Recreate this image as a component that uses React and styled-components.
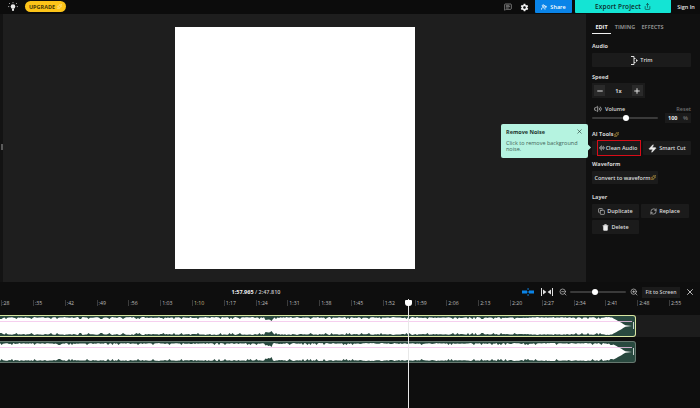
import React from "react";
import styled, { createGlobalStyle } from "styled-components";
import {
  MessageSquareText,
  Minus,
  Plus,
  Share,
  UserPlus,
  X,
  ZoomIn,
  ZoomOut,
  Zap,
  Sparkles,
  Copy,
  RefreshCw,
  Trash,
  Volume2,
  AudioLines,
} from "lucide-react";
import { IoMdSettings } from "react-icons/io";

const GlobalStyle = createGlobalStyle`
  html, body {
    margin: 0;
    padding: 0;
    width: 700px;
    height: 408px;
    overflow: hidden;
    background: #0e0e0e;
    font-family: "Open Sans", "Liberation Sans", sans-serif;
  }
  * { box-sizing: border-box; }
`;

const Page = styled.div`
  position: relative;
  width: 700px;
  height: 408px;
  display: flex;
  flex-direction: column;
  overflow: hidden;
`;

const TopBar = styled.header`
  height: 14px;
  background: #0c0c0c;
  display: flex;
  align-items: center;
  color: #e8e8e8;
`;

const BulbBox = styled.div`
  width: 25px;
  display: flex;
  justify-content: center;
`;

const Upgrade = styled.div`
  width: 41px;
  height: 11px;
  margin-top: -1px;
  border-radius: 6px;
  background: #fcc419;
  color: #4a3a06;
  font-size: 5.5px;
  font-weight: 700;
  display: flex;
  align-items: center;
  justify-content: center;
  gap: 2px;
`;

const TopRight = styled.div`
  margin-left: auto;
  height: 100%;
  display: flex;
  align-items: center;
`;

const TopIcon = styled.div`
  width: 17px;
  display: flex;
  justify-content: center;
`;

const ShareBtn = styled.div`
  width: 37px;
  height: 13px;
  align-self: flex-start;
  margin: 0 3px 0 2px;
  background: #0a84e8;
  color: #fff;
  font-size: 5.5px;
  font-weight: 600;
  border-radius: 0 0 1px 1px;
  display: flex;
  align-items: center;
  justify-content: center;
  gap: 3px;
`;

const ExportBtn = styled.div`
  width: 96px;
  height: 13px;
  align-self: flex-start;
  background: #14e4d4;
  color: #0c2b2a;
  font-size: 6.5px;
  font-weight: 600;
  letter-spacing: 0.1px;
  border-radius: 0 0 1px 1px;
  display: flex;
  align-items: center;
  justify-content: center;
  gap: 3px;
`;

const SignIn = styled.div`
  width: 29px;
  padding-left: 1px;
  text-align: center;
  font-size: 5.5px;
  font-weight: 600;
`;

const Main = styled.div`
  height: 268px;
  display: flex;
`;

const Stage = styled.div`
  width: 586px;
  background: #1e1e1e;
  display: flex;
  padding-top: 13px;
`;

const Rail = styled.div`
  position: relative;
  width: 3px;
  height: 268px;
  margin-top: -13px;
  margin-right: 172px;
  background: #131313;

  &::after {
    content: "";
    position: absolute;
    left: 1px;
    top: 130px;
    width: 2px;
    height: 6px;
    background: #5a5a5a;
  }
`;

const Artboard = styled.div`
  width: 240px;
  height: 242px;
  background: #fff;
`;

const Panel = styled.aside`
  flex: 1;
  background: #101010;
  padding: 7px 9px 0 6px;
  color: #d8d8d8;
`;

const Tabs = styled.div`
  display: flex;
  height: 13px;
  margin-bottom: 9px;
`;

const Tab = styled.div`
  font-size: 5.5px;
  font-weight: 700;
  width: ${(p) => p.$w}px;
  margin-right: ${(p) => p.$gap}px;
  text-align: center;
  line-height: 12px;
  white-space: nowrap;
  color: ${(p) => (p.$active ? "#f2f2f2" : "#8b8b8b")};
  border-bottom: ${(p) => (p.$active ? "1px solid #f2f2f2" : "none")};
`;

const Label = styled.div`
  font-size: 5.5px;
  font-weight: 700;
  height: 7px;
  line-height: 7px;
  margin-top: ${(p) => p.$top ?? 0}px;
  margin-bottom: ${(p) => p.$bottom ?? 3}px;
  color: #d4d4d4;
  display: flex;
  align-items: center;
  gap: 1px;
`;

const Btn = styled.div`
  position: relative;
  height: ${(p) => p.$h ?? 14}px;
  width: ${(p) => p.$w}px;
  background: #1b1b1b;
  border-radius: 1px;
  color: #dedede;
  font-size: 5.5px;
  font-weight: 600;
  white-space: nowrap;
  display: flex;
  align-items: center;
  justify-content: center;
  padding-left: ${(p) => p.$shift ?? 0}px;
  gap: ${(p) => p.$gap ?? 2}px;

  ${(p) =>
    p.$flagged &&
    `&::after {
      content: "";
      position: absolute;
      left: 5px;
      right: -1px;
      top: -1px;
      bottom: -1px;
      border: 1.5px solid #d80c18;
    }`}
`;

const Row = styled.div`
  display: flex;
  gap: ${(p) => p.$gap ?? 3}px;
  margin-bottom: ${(p) => p.$bottom ?? 0}px;
`;

const SpeedBox = styled.div`
  width: 53px;
  height: 15px;
  background: #1b1b1b;
  padding: 2px;
  display: flex;
  align-items: center;
  justify-content: space-between;
  font-size: 5.5px;
  font-weight: 700;
`;

const SpeedKey = styled.div`
  width: 11px;
  height: 11px;
  background: #2a2a2a;
  display: flex;
  align-items: center;
  justify-content: center;
  color: #e0e0e0;
`;

const VolumeHead = styled.div`
  display: flex;
  align-items: center;
  gap: 3px;
  height: 7px;
  margin-top: 7px;
  padding-left: 2px;
  font-size: 5.5px;
  font-weight: 600;
`;

const Reset = styled.span`
  margin-left: auto;
  color: #6f6f6f;
  font-weight: 600;
`;

const VolumeRow = styled.div`
  display: flex;
  align-items: center;
  justify-content: space-between;
  height: 11px;
  margin-bottom: 8px;
`;

const Track = styled.div`
  position: relative;
  height: 2px;
  width: ${(p) => p.$w}px;
  background: #3a3a3a;
  border-radius: 1px;
`;

const Thumb = styled.div`
  position: absolute;
  top: -2px;
  left: ${(p) => p.$left}px;
  width: 6px;
  height: 6px;
  border-radius: 50%;
  background: #fff;
`;

const VolumeBox = styled.div`
  width: 26px;
  height: 10px;
  background: #1b1b1b;
  display: flex;
  align-items: center;
  justify-content: space-between;
  padding: 0 3px;
  font-size: 5.5px;
  font-weight: 700;
  color: #eee;

  & span {
    color: #666;
  }
`;

const Tip = styled.div`
  position: absolute;
  left: 501px;
  top: 124px;
  width: 87px;
  height: 34px;
  background: #b5f3e0;
  border-radius: 2px;
  padding: 4px 5px;
  color: #3f5f56;
  font-size: 5.5px;
  line-height: 6px;

  &::after {
    content: "";
    position: absolute;
    right: -2px;
    top: 21px;
    width: 5px;
    height: 5px;
    background: #b5f3e0;
    transform: rotate(45deg);
  }
`;

const TipTitle = styled.div`
  font-weight: 700;
  color: #23352f;
  margin-bottom: 5px;
  display: flex;
  justify-content: space-between;
  align-items: center;
`;

const Timeline = styled.section`
  position: relative;
  flex: 1;
  background: #0e0e0e;
  color: #bdbdbd;
`;

const Controls = styled.div`
  height: 17px;
  display: flex;
  align-items: center;
  padding-top: 3px;
`;

const TimeText = styled.div`
  width: 512px;
  margin-right: 6px;
  text-align: center;
  font-size: 5.5px;
  color: #c8c8c8;
  font-weight: 600;

  & b {
    color: #f0f0f0;
    font-weight: 700;
  }
`;

const ZoomTools = styled.div`
  display: flex;
  align-items: center;
  color: #cfcfcf;
`;

const ToolIcon = styled.div`
  width: ${(p) => p.$w}px;
  display: flex;
  justify-content: center;
`;

const FitBtn = styled.div`
  width: 38px;
  height: 11px;
  background: #1b1b1b;
  color: #cfcfcf;
  font-size: 5.2px;
  font-weight: 600;
  white-space: nowrap;
  display: flex;
  align-items: center;
  justify-content: center;
`;

const CloseBox = styled.div`
  width: 20px;
  display: flex;
  justify-content: center;
  color: #d8d8d8;
`;

const Ruler = styled.div`
  height: 16px;
  display: flex;
  padding-left: 1.2px;
`;

const Tick = styled.div`
  flex: 0 0 31.8px;
  height: 6px;
  margin-top: 1px;
  border-left: 1px solid #3c3c3c;
  padding-left: ${(p) => (p.$first ? 0 : 1)}px;
  font-size: 5.2px;
  line-height: 6px;
  font-weight: 500;
  color: ${(p) => (p.$hot ? "#cdbb84" : "#bcbcbc")};
  white-space: nowrap;
`;

const Lane = styled.div`
  height: 22px;
  margin-bottom: ${(p) => p.$bottom}px;
  background: ${(p) => (p.$on ? "#1c1c1c" : "transparent")};
`;

const Clip = styled.div`
  position: relative;
  width: 636px;
  height: 22px;
  background: #29493f;
  border: 1px solid ${(p) => (p.$on ? "#d9e6a2" : "#66786f")};
  border-left: none;
  border-radius: 0 3px 3px 0;
  overflow: hidden;
`;

const Handle = styled.div`
  position: absolute;
  right: 1px;
  top: 6px;
  width: 1px;
  height: 7px;
  background: #c8d4d0;
`;

const Playhead = styled.div`
  position: absolute;
  left: 408px;
  top: 17px;
  bottom: 0;
  width: 1px;
  background: #e8e8e8;

  &::before {
    content: "";
    position: absolute;
    left: -3px;
    top: 1px;
    width: 7px;
    height: 6px;
    background: #fff;
    border-radius: 1px 1px 3px 3px;
  }
`;

const ticks = [
  ":28", ":35", ":42", ":49", ":56", "1:03", "1:10", "1:17", "1:24", "1:31", "1:38",
  "1:45", "1:52", "1:59", "2:06", "2:13", "2:20", "2:27", "2:34", "2:41", "2:48", "2:55",
];

// jagged outline for the audio clip, same seed gives same shape
function wavePath(seed) {
  let top = "M0 10";
  let bottom = "";
  let r = seed;
  for (let x = 0; x <= 626; x += 1.5) {
    r = (r * 9301 + 49297) % 233280;
    const n = r / 233280;
    let h = 8 + n * 1.1;
    if (n > 0.86) h -= 2;
    if (x > 265 && x < 272) h -= 2;
    if (x > 612) h = (8 * (626 - x)) / 14 + 0.5;
    top += ` L${x} ${(10 - h).toFixed(1)}`;
    bottom = ` L${x} ${(10 + h).toFixed(1)}` + bottom;
  }
  return top + " L632 10" + bottom + " Z";
}

const Wave = ({ seed }) => (
  <svg width="636" height="20" viewBox="0 0 636 20" style={{ display: "block" }}>
    <path d={wavePath(seed)} fill="#fff" />
    <rect x="0" y="5" width="632" height="0.8" fill="#f4c4ec" />
  </svg>
);

const BulbIcon = () => (
  <svg width="10" height="10" viewBox="0 0 10 10" fill="#e8e8e8">
    <circle cx="5" cy="4.6" r="2.3" />
    <rect x="4" y="7" width="2" height="1.8" />
    <path d="M5 .2v1M1 1l.8.8M9 1l-.8.8M.2 4.6h1M8.8 4.6h1" stroke="#e8e8e8" strokeWidth=".8" />
  </svg>
);

const SplitIcon = () => (
  <svg width="12" height="8" viewBox="0 0 12 8" fill="#0a84e8">
    <rect x="0" y="2.5" width="5" height="3" />
    <rect x="7" y="2.5" width="5" height="3" />
    <rect x="5.6" y="0" width="0.9" height="2" />
    <rect x="5.6" y="3" width="0.9" height="2" />
    <rect x="5.6" y="6" width="0.9" height="2" />
  </svg>
);

const FitIcon = () => (
  <svg width="12" height="8" viewBox="0 0 12 8" fill="#e0e0e0">
    <rect x="0" y="0" width="1" height="8" />
    <rect x="11" y="0" width="1" height="8" />
    <path d="M5.4 4L2 1.5v5zM6.6 4L10 1.5v5z" />
  </svg>
);

const TrimIcon = () => (
  <svg width="8" height="9" viewBox="0 0 8 9" fill="none" stroke="#dedede" strokeWidth="1">
    <path d="M1 .5h3v8H1M4 2.5h1.5M4 6.5h1.5" />
    <path d="M6 3l2 1.5L6 6z" fill="#dedede" stroke="none" />
  </svg>
);

export default function App() {
  return (
    <Page>
      <GlobalStyle />
      <TopBar>
        <BulbBox>
          <BulbIcon />
        </BulbBox>
        <Upgrade>
          UPGRADE <Sparkles size={5} color="#fff3c0" />
        </Upgrade>
        <TopRight>
          <TopIcon>
            <MessageSquareText size={8} color="#a8a8a8" />
          </TopIcon>
          <TopIcon>
            <IoMdSettings size={9} color="#f0f0f0" />
          </TopIcon>
          <ShareBtn>
            <UserPlus size={6} strokeWidth={3} /> Share
          </ShareBtn>
          <ExportBtn>
            Export Project <Share size={7} />
          </ExportBtn>
          <SignIn>Sign In</SignIn>
        </TopRight>
      </TopBar>

      <Main>
        <Stage>
          <Rail />
          <Artboard />
        </Stage>
        <Panel>
          <Tabs>
            <Tab $active $w={19} $gap={3}>EDIT</Tab>
            <Tab $w={22} $gap={5}>TIMING</Tab>
            <Tab $w={23} $gap={0}>EFFECTS</Tab>
          </Tabs>

          <Label>Audio</Label>
          <Btn $w={99} $h={14}>
            <TrimIcon /> Trim
          </Btn>

          <Label $top={7} $bottom={2}>Speed</Label>
          <SpeedBox>
            <SpeedKey><Minus size={8} strokeWidth={3} /></SpeedKey>
            1x
            <SpeedKey><Plus size={8} strokeWidth={3} /></SpeedKey>
          </SpeedBox>

          <VolumeHead>
            <Volume2 size={8} /> Volume
            <Reset>Reset</Reset>
          </VolumeHead>
          <VolumeRow>
            <Track $w={66}><Thumb $left={31} /></Track>
            <VolumeBox>100 <span>%</span></VolumeBox>
          </VolumeRow>

          <Label>AI Tools <Sparkles size={5} color="#e8c050" /></Label>
          <Row $bottom={6}>
            <Btn $w={48} $flagged $shift={4} $gap={1}>
              <AudioLines size={6} /> Clean Audio
            </Btn>
            <Btn $w={48}>
              <Zap size={9} fill="#eee" /> Smart Cut
            </Btn>
          </Row>

          <Label>Waveform</Label>
          <Btn $w={66} $h={13} $gap={0}>
            Convert to waveform<Sparkles size={5} color="#e8c050" />
          </Btn>

          <Label $top={10}>Layer</Label>
          <Row $gap={2} $bottom={2}>
            <Btn $w={47}><Copy size={7} /> Duplicate</Btn>
            <Btn $w={48}><RefreshCw size={7} /> Replace</Btn>
          </Row>
          <Btn $w={47}><Trash size={7} fill="#eee" /> Delete</Btn>
        </Panel>
      </Main>

      <Timeline>
        <Controls>
          <TimeText><b>1:57.965</b> / 2:47.810</TimeText>
          <ZoomTools>
            <ToolIcon $w={19}><SplitIcon /></ToolIcon>
            <ToolIcon $w={19}><FitIcon /></ToolIcon>
            <ToolIcon $w={14}><ZoomOut size={8} /></ToolIcon>
            <Track $w={56}><Thumb $left={22} /></Track>
            <ToolIcon $w={16}><ZoomIn size={8} /></ToolIcon>
            <FitBtn>Fit to Screen</FitBtn>
            <CloseBox><X size={10} /></CloseBox>
          </ZoomTools>
        </Controls>
        <Ruler>
          {ticks.map((t, i) => (
            <Tick key={t} $first={i === 0} $hot={t === "1:10"}>{t}</Tick>
          ))}
        </Ruler>
        <Lane $on $bottom={4}>
          <Clip $on>
            <Wave seed={17} />
            <Handle />
          </Clip>
        </Lane>
        <Lane $bottom={0}>
          <Clip>
            <Wave seed={41} />
            <Handle />
          </Clip>
        </Lane>
        <Playhead />
      </Timeline>

      <Tip>
        <TipTitle>
          Remove Noise <X size={7} strokeWidth={2} />
        </TipTitle>
        Click to remove background noise.
      </Tip>
    </Page>
  );
}
